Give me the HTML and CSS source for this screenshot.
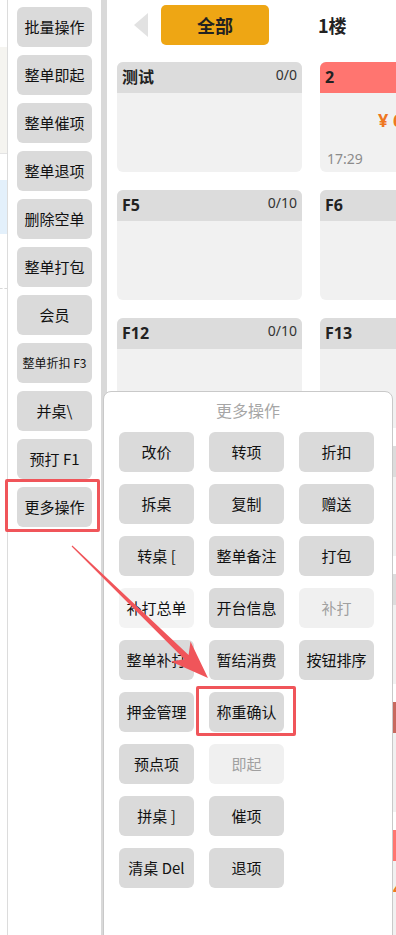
FILE: index.html
```html
<!DOCTYPE html>
<html lang="zh">
<head>
<meta charset="utf-8">
<title>更多操作</title>
<link rel="stylesheet" href="styles.css">
</head>
<body>
<div class="app">
  <div class="backlist">
    <div class="bl-row bl-white" style="height:47px"></div>
    <div class="bl-row bl-beige" style="height:106px"></div>
    <div class="bl-row bl-white bl-line" style="height:27px"></div>
    <div class="bl-row bl-blue" style="height:54px"></div>
    <div class="bl-row bl-white bl-dash" style="height:55px"></div>
  </div>
  <div class="sidebar">
    <div class="sbtn">批量操作</div>
    <div class="sbtn">整单即起</div>
    <div class="sbtn">整单催项</div>
    <div class="sbtn">整单退项</div>
    <div class="sbtn">删除空单</div>
    <div class="sbtn">整单打包</div>
    <div class="sbtn">会员</div>
    <div class="sbtn small">整单折扣 F3</div>
    <div class="sbtn">并桌\</div>
    <div class="sbtn">预打 F1</div>
    <div class="sbtn">更多操作</div>
  </div>
  <div class="scrollbar"></div>
  <div class="main">
    <div class="tabbar">
      <div class="arrow-left"></div>
      <div class="tab active">全部</div>
      <div class="tab">1楼</div>
    </div>
    <div class="cards">
      <div class="card"><div class="card-head"><span class="ct">测试</span><span class="cnt">0/0</span></div><div class="card-body"></div></div>
      <div class="card busy"><div class="card-head"><span class="ct">2</span></div><div class="card-body"><div class="amount">¥ 68.00</div><div class="time">17:29</div></div></div>
      <div class="card"><div class="card-head"><span class="ct">F5</span><span class="cnt">0/10</span></div><div class="card-body"></div></div>
      <div class="card"><div class="card-head"><span class="ct">F6</span><span class="cnt">0/10</span></div><div class="card-body"></div></div>
      <div class="card"><div class="card-head"><span class="ct">F12</span><span class="cnt">0/10</span></div><div class="card-body"></div></div>
      <div class="card"><div class="card-head"><span class="ct">F13</span><span class="cnt">0/10</span></div><div class="card-body"></div></div>
      <div class="card"><div class="card-head"><span class="ct">F15</span></div><div class="card-body"></div></div>
      <div class="card"><div class="card-head"><span class="ct">F16</span></div><div class="card-body"></div></div>
      <div class="card"><div class="card-head"><span class="ct">F17</span></div><div class="card-body"></div></div>
      <div class="card"><div class="card-head"><span class="ct">F18</span></div><div class="card-body"></div></div>
      <div class="card"><div class="card-head"><span class="ct">F19</span></div><div class="card-body"></div></div>
      <div class="card busy dim"><div class="card-head"><span class="ct">5</span></div><div class="card-body"></div></div>
      <div class="card"><div class="card-head"><span class="ct">F21</span></div><div class="card-body"></div></div>
      <div class="card busy"><div class="card-head"><span class="ct">6</span></div><div class="card-body"><div class="amount">¥ 45.00</div></div></div>
    </div>
  </div>
</div>

<div class="popup">
  <div class="popup-title">更多操作</div>
  <div class="pgrid">
    <div class="pbtn">改价</div>
    <div class="pbtn">转项</div>
    <div class="pbtn">折扣</div>
    <div class="pbtn">拆桌</div>
    <div class="pbtn">复制</div>
    <div class="pbtn">赠送</div>
    <div class="pbtn">转桌 [</div>
    <div class="pbtn">整单备注</div>
    <div class="pbtn">打包</div>
    <div class="pbtn light">补打总单</div>
    <div class="pbtn">开台信息</div>
    <div class="pbtn disabled">补打</div>
    <div class="pbtn">整单补打</div>
    <div class="pbtn">暂结消费</div>
    <div class="pbtn">按钮排序</div>
    <div class="pbtn">押金管理</div>
    <div class="pbtn">称重确认</div>
    <div class="pbtn empty"></div>
    <div class="pbtn">预点项</div>
    <div class="pbtn disabled">即起</div>
    <div class="pbtn empty"></div>
    <div class="pbtn">拼桌 ]</div>
    <div class="pbtn">催项</div>
    <div class="pbtn empty"></div>
    <div class="pbtn">清桌 Del</div>
    <div class="pbtn">退项</div>
  </div>
</div>

<div class="mark mark-more"></div>
<div class="mark mark-weigh"></div>

<svg class="annot" width="396" height="935" viewBox="0 0 396 935" xmlns="http://www.w3.org/2000/svg">
  <polygon fill="#f0555a" points="72.4,545.6 188.6,654.9 190.5,641.4 208,678 170.9,661.6 184.4,659.3 71.6,546.4"/>
</svg>
</body>
</html>
```
FILE: styles.css
```css
* { box-sizing: border-box; }
html, body { margin: 0; padding: 0; }
body {
  width: 396px;
  height: 935px;
  overflow: hidden;
  position: relative;
  background: #fff;
  font-family: "Noto Sans", "Noto Sans CJK SC", sans-serif;
  color: #222;
}
.app {
  display: flex;
  height: 935px;
}
.backlist {
  width: 8px;
  flex: none;
  border-right: 1px solid #dcdcdc;
  display: flex;
  flex-direction: column;
}
.bl-white { background: #fff; }
.bl-beige { background: #f5f4f0; }
.bl-blue { background: #e3f0fb; }
.bl-line { border-top: 1px solid #e4e4e4; }
.bl-dash { border-bottom: 1px dashed #d8d8d8; }

.sidebar {
  width: 93px;
  flex: none;
  padding: 7px 0 0 9px;
  display: flex;
  flex-direction: column;
  gap: 8px;
}
.sbtn {
  width: 75px;
  height: 40px;
  border-radius: 6px;
  background: #dadada;
  display: flex;
  align-items: center;
  justify-content: center;
  font-family: "Noto Sans CJK SC", sans-serif;
  font-size: 15px;
  line-height: 18px;
  color: #111;
  white-space: nowrap;
}
.sbtn.small { font-size: 12px; }
.scrollbar {
  width: 6px;
  flex: none;
  background: #d9d9d9;
}
.main {
  flex: 1;
  overflow: hidden;
  padding-top: 5px;
}
.tabbar {
  height: 40px;
  display: flex;
  align-items: center;
}
.arrow-left {
  width: 0;
  height: 0;
  margin-left: 27px;
  border-top: 12px solid transparent;
  border-bottom: 12px solid transparent;
  border-right: 14px solid #e2e2e2;
}
.tab {
  height: 40px;
  display: flex;
  align-items: center;
  justify-content: center;
  font-family: "Noto Sans CJK SC", sans-serif;
  font-weight: 700;
  font-size: 18px;
  color: #222;
}
.tab.active {
  width: 108px;
  margin-left: 13px;
  border-radius: 5px;
  background: #eea614;
}
.tab + .tab:not(.active) {
  margin-left: 49px;
}
.cards {
  margin: 17px 0 0 10px;
  display: grid;
  grid-template-columns: 185px 185px;
  grid-auto-rows: 110px;
  gap: 18px;
}
.card {
  border-radius: 6px;
  overflow: hidden;
  background: #f1f1f1;
  display: flex;
  flex-direction: column;
}
.card-head {
  height: 31px;
  flex: none;
  background: #dcdcdc;
  display: flex;
  justify-content: space-between;
  padding: 0 5px;
}
.ct {
  font-weight: 700;
  font-size: 16px;
  line-height: 31px;
  color: #222;
  font-family: "Noto Sans", "Noto Sans CJK SC", sans-serif;
}
.cnt {
  font-size: 14px;
  line-height: 26px;
  color: #333;
}
.card.busy .card-head { background: #ff7570; }
.card.busy.dim .card-head { background: #c8695f; }
.card-body {
  flex: 1;
  display: flex;
  flex-direction: column;
  padding: 0 7px;
}
.amount {
  margin: 16px 0 0 51px;
  font-size: 18px;
  line-height: 22px;
  font-weight: 700;
  color: #ee7722;
  white-space: nowrap;
}
.time {
  margin-top: auto;
  margin-bottom: 4px;
  font-size: 14px;
  color: #8c8c8c;
}

.popup {
  position: absolute;
  left: 103px;
  top: 391px;
  width: 290px;
  height: 560px;
  background: #fff;
  border: 1px solid #c9c9c9;
  border-radius: 8px;
  padding: 8px 0 0 15px;
}
.popup-title {
  text-align: center;
  margin-left: -15px;
  font-family: "Noto Sans CJK SC", sans-serif;
  font-size: 16px;
  line-height: 20px;
  color: #a6a6a6;
}
.pgrid {
  margin-top: 12px;
  display: grid;
  grid-template-columns: 75px 75px 75px;
  grid-auto-rows: 40px;
  column-gap: 15px;
  row-gap: 12px;
}
.pbtn {
  border-radius: 6px;
  background: #dadada;
  display: flex;
  align-items: center;
  justify-content: center;
  font-family: "Noto Sans CJK SC", sans-serif;
  font-size: 15px;
  line-height: 18px;
  color: #111;
  white-space: nowrap;
}
.pbtn.light { background: #f3f3f3; }
.pbtn.disabled { background: #f0f0f0; color: #a0a0a0; }
.pbtn.empty { background: transparent; }

.mark {
  position: absolute;
  border: 3px solid #f0555a;
  border-radius: 2px;
}
.mark-more { left: 5px; top: 479px; width: 95px; height: 53px; }
.mark-weigh { left: 196px; top: 686px; width: 100px; height: 50px; }
.annot {
  position: absolute;
  left: 0;
  top: 0;
  pointer-events: none;
}
```
